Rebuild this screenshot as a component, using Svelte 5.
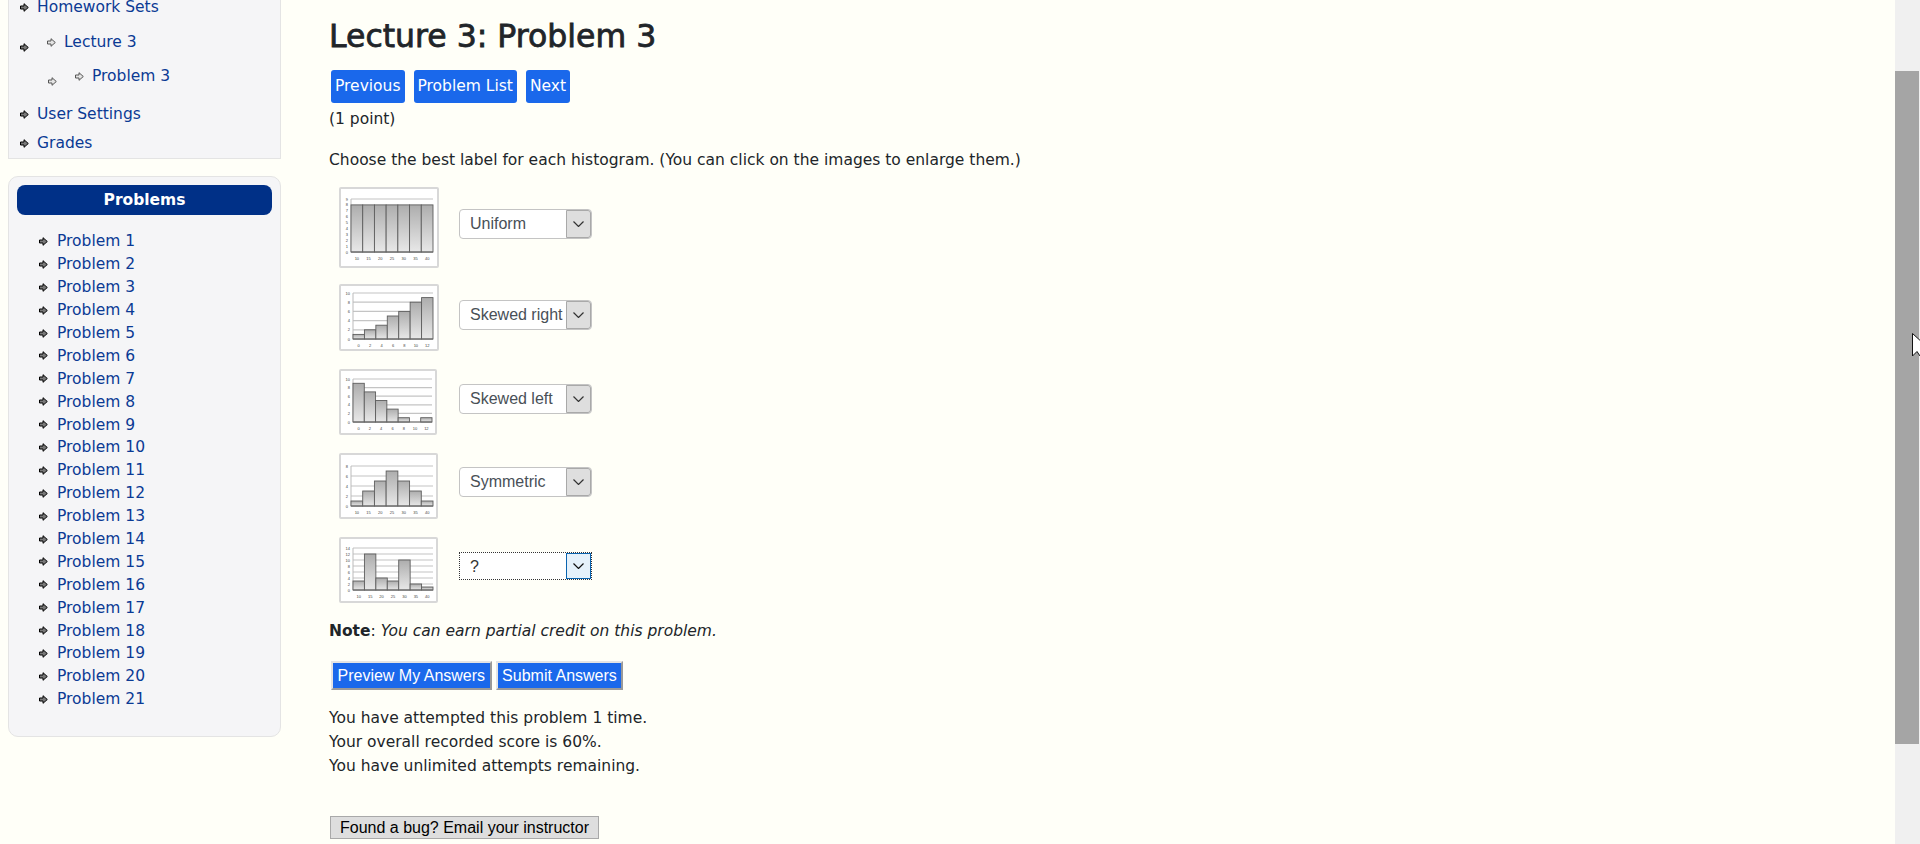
<script>
  const problems = Array.from({ length: 21 }, (_, i) => `Problem ${i + 1}`);

  const charts = [
    { w: 100, h: 81, x0: 12, x1: 94, base: 65, top: 12, max: 9, step: 1, gridStep: 9, bars: [8, 8, 8, 8, 8, 8, 8], xs: [10, 15, 20, 25, 30, 35, 40], label: "Uniform", dy: 22 },
    { w: 100, h: 67, x0: 14, x1: 94, base: 55, top: 9, max: 10, step: 2, gridStep: 2, bars: [1, 2, 3, 5, 6, 8, 9], xs: [0, 2, 4, 6, 8, 10, 12], label: "Skewed right", dy: 16 },
    { w: 98, h: 66, x0: 14, x1: 93, base: 53, top: 10, max: 10, step: 2, gridStep: 2, bars: [9, 7, 5, 3, 1, 0, 1], xs: [0, 2, 4, 6, 8, 10, 12], label: "Skewed left", dy: 15 },
    { w: 99, h: 66, x0: 12, x1: 94, base: 53, top: 13, max: 8, step: 2, gridStep: 2, bars: [1, 3, 5, 7, 5, 3, 1], xs: [10, 15, 20, 25, 30, 35, 40], label: "Symmetric", dy: 14 },
    { w: 99, h: 66, x0: 14, x1: 94, base: 53, top: 11, max: 14, step: 2, gridStep: 2, bars: [3, 12, 4, 3, 10, 2, 1], xs: [10, 15, 20, 25, 30, 35, 40], label: "?", dy: 15, focused: true }
  ];

  function ticks(max, step) {
    const out = [];
    for (let v = 0; v <= max; v += step) out.push(v);
    return out;
  }

  function yOf(c, v) {
    return c.base - ((c.base - c.top) * v) / c.max;
  }
</script>

{#snippet arrow(light)}
  <svg class="arrow" class:light width="9" height="9" viewBox="0 0 9 9">
    <path d="M.5 3H4V.7L8.3 4.5 4 8.3V6H.5Z" />
  </svg>
{/snippet}

<div class="page">
  <div class="scroller">
    <aside class="sidebar">
      <nav class="card site-nav">
        <div class="nav-row">{@render arrow(false)}<a href="#a">Homework Sets</a></div>
        <div class="nav-row nested">
          <span class="outer">{@render arrow(false)}</span>
          <span class="inner">{@render arrow(true)}</span>
          <a href="#a">Lecture 3</a>
        </div>
        <div class="nav-row nested second">
          <span class="outer">{@render arrow(true)}</span>
          <span class="inner">{@render arrow(true)}</span>
          <a href="#a">Problem 3</a>
        </div>
        <div class="nav-row settings">{@render arrow(false)}<a href="#a">User Settings</a></div>
        <div class="nav-row grades">{@render arrow(false)}<a href="#a">Grades</a></div>
      </nav>

      <section class="card problems">
        <h2>Problems</h2>
        <ul>
          {#each problems as p}
            <li>{@render arrow(false)}<a href="#a">{p}</a></li>
          {/each}
        </ul>
      </section>
    </aside>

    <main>
      <h1>Lecture 3: Problem 3</h1>
      <div class="pager">
        <a class="btn" href="#a">Previous</a>
        <a class="btn" href="#a">Problem List</a>
        <a class="btn" href="#a">Next</a>
      </div>
      <p class="points">(1 point)</p>
      <p class="prompt">Choose the best label for each histogram. (You can click on the images to enlarge them.)</p>

      <div class="charts">
        {#each charts as c, i}
          <div class="chart-row">
            <svg class="thumb" width={c.w} height={c.h} viewBox="0 0 {c.w} {c.h}">
              <defs>
                <linearGradient id="bar{i}" x1="0" y1="0" x2="0" y2="1">
                  <stop offset="0" stop-color="#adadad" />
                  <stop offset="1" stop-color="#e8e8e8" />
                </linearGradient>
              </defs>
              <rect x="1" y="1" width={c.w - 2} height={c.h - 2} fill="#fff" stroke="#d8d8d8" stroke-width="2" rx="1" />
              {#each ticks(c.max, c.gridStep) as v}
                <line x1={c.x0} x2={c.x1} y1={yOf(c, v)} y2={yOf(c, v)} stroke="#c4c4c4" stroke-width="1.2" />
              {/each}
              <line x1={c.x0} x2={c.x0} y1={c.top} y2={c.base} stroke="#bbb" />
              {#each c.bars as b, j}
                {#if b > 0}
                  <rect
                    x={c.x0 + ((c.x1 - c.x0) * j) / 7}
                    y={yOf(c, b)}
                    width={(c.x1 - c.x0) / 7}
                    height={c.base - yOf(c, b)}
                    fill="url(#bar{i})"
                    stroke="#5e5e5e"
                    stroke-width=".9"
                  />
                {/if}
              {/each}
              <line x1={c.x0} x2={c.x1} y1={c.base} y2={c.base} stroke="#666" />
              {#each ticks(c.max, c.step) as v}
                <text x={c.x0 - 3} y={yOf(c, v) + 1.5} text-anchor="end" class="tick">{v}</text>
              {/each}
              {#each c.xs as x, j}
                <text x={c.x0 + ((c.x1 - c.x0) * (j + 0.5)) / 7} y={c.base + 8} text-anchor="middle" class="tick">{x}</text>
              {/each}
            </svg>
            <div class="select" class:focused={c.focused} style="margin-top: {c.dy}px">
              <span class="value">{c.label}</span>
              <span class="caret">
                <svg width="11" height="6" viewBox="0 0 11 6"><path d="M.5.5l5 5 5-5" fill="none" stroke="currentColor" stroke-width="1.2" /></svg>
              </span>
            </div>
          </div>
        {/each}
      </div>

      <p class="note"><strong>Note</strong>: <em>You can earn partial credit on this problem.</em></p>

      <div class="actions">
        <button type="button">Preview My Answers</button>
        <button type="button">Submit Answers</button>
      </div>

      <div class="status">
        <div>You have attempted this problem 1 time.</div>
        <div>Your overall recorded score is 60%.</div>
        <div>You have unlimited attempts remaining.</div>
      </div>

      <button type="button" class="bug">Found a bug? Email your instructor</button>
    </main>
  </div>

  <div class="scrollbar"><div class="thumb-bar"></div></div>

  <svg class="cursor" width="12" height="24" viewBox="0 0 12 24">
    <path d="M.5.5V23L5 18.5 8 23 12 20V11Z" fill="#fff" stroke="#111" />
  </svg>
</div>

<style>
  :global(body) {
    margin: 0;
    background: #fffff8;
  }

  .page {
    position: relative;
    display: flex;
    height: 844px;
    overflow: hidden;
    font-family: "DejaVu Sans", sans-serif;
    font-size: 15.5px;
    color: #212529;
  }

  .scroller {
    flex: 1;
    display: flex;
    align-items: flex-start;
    margin-top: -8px;
  }

  .sidebar {
    width: 273px;
    margin-left: 8px;
    flex-shrink: 0;
  }

  a {
    color: #0b3a94;
    text-decoration: none;
  }

  .card {
    background: #f5f5f7;
    border: 1px solid #e4e4e4;
    box-sizing: border-box;
  }

  .site-nav {
    height: 167px;
    border-top: 0;
    padding: 4px 0 0 11px;
  }

  .nav-row {
    display: flex;
    align-items: center;
    height: 22px;
  }

  .nav-row > a {
    margin-left: 8px;
  }

  .arrow {
    flex-shrink: 0;
  }

  .arrow path {
    fill: #777;
    stroke: #000;
  }

  .arrow.light path {
    fill: #e4e4e4;
    stroke: #555;
  }

  .nested {
    margin-top: 13px;
  }

  .nested .outer {
    display: flex;
    margin-top: 11px;
  }

  .nested .inner {
    display: flex;
    margin-left: 18px;
    margin-top: 1px;
  }

  .nested.second {
    margin-top: 12px;
    padding-left: 28px;
  }

  .settings {
    margin-top: 16px;
  }

  .grades {
    margin-top: 7px;
  }

  .problems {
    margin-top: 17px;
    height: 561px;
    border-radius: 10px;
    padding: 8px;
  }

  .problems h2 {
    margin: 0;
    height: 30px;
    line-height: 30px;
    border-radius: 8px;
    background: #003087;
    color: #fff;
    font-size: 15.5px;
    font-weight: 700;
    text-align: center;
  }

  .problems ul {
    list-style: none;
    margin: 15px 0 0;
    padding: 0 0 0 22px;
  }

  .problems li {
    display: flex;
    align-items: center;
    gap: 9px;
    height: 22.9px;
  }

  main {
    margin-left: 48px;
    min-width: 0;
  }

  h1 {
    margin: 24px 0 0;
    font-size: 31.5px;
    line-height: 40px;
    font-weight: 400;
    -webkit-text-stroke: 0.8px #212529;
  }

  .pager {
    display: flex;
    gap: 9px;
    margin: 14px 0 0 2px;
  }

  .btn {
    display: block;
    height: 33px;
    line-height: 32px;
    padding: 0 4px;
    background: #1a68eb;
    color: #fff;
    border-radius: 3px;
  }

  .points {
    margin: 5px 0 0;
    line-height: 22px;
  }

  .prompt {
    margin: 19px 0 0;
    line-height: 22px;
  }

  .charts {
    margin-top: 16px;
    padding-left: 10px;
    display: flex;
    flex-direction: column;
    gap: 18px;
  }

  .chart-row {
    display: grid;
    grid-template-columns: 120px auto;
    justify-content: start;
    align-items: start;
  }

  .chart-row:first-child {
    margin-bottom: -2px;
  }

  .thumb {
    display: block;
  }

  .tick {
    font-size: 4px;
    fill: #444;
    font-family: "Liberation Sans", sans-serif;
  }

  .select {
    display: flex;
    width: 133px;
    height: 30px;
    box-sizing: border-box;
    border: 1px solid #c4c4c4;
    border-radius: 4px;
    background: #fff;
    font-family: "Liberation Sans", sans-serif;
    font-size: 16px;
    color: #495057;
  }

  .value {
    flex: 1;
    padding-left: 10px;
    line-height: 28px;
    white-space: nowrap;
  }

  .caret {
    width: 25px;
    display: flex;
    align-items: center;
    justify-content: center;
    background: #dedede;
    border: 1px solid #a9a9a9;
    box-sizing: border-box;
    border-radius: 0 3px 3px 0;
    color: #333;
  }

  .select.focused {
    height: 28px;
    border: 1px dotted #333;
    border-radius: 0;
    color: #333;
  }

  .select.focused .caret {
    background: #e5f1fb;
    border-color: #0a64b0;
    color: #111;
    border-radius: 0;
  }

  .note {
    margin: 17px 0 0;
    line-height: 22px;
  }

  .actions {
    display: flex;
    gap: 4px;
    margin: 19px 0 0 2px;
  }

  .actions button {
    height: 29px;
    padding: 0 4.5px;
    background: #1a68eb;
    color: #fff;
    border: 2px solid;
    border-color: #e4e4e4 #9a9a9a #9a9a9a #e4e4e4;
    font-family: "Liberation Sans", sans-serif;
    font-size: 16px;
  }

  .status {
    margin-top: 16px;
    line-height: 24px;
  }

  .bug {
    display: block;
    margin: 38px 0 0 1px;
    height: 23px;
    width: 269px;
    padding: 0;
    background: #dedede;
    color: #000;
    border: 1px solid #a9a9a9;
    font-family: "Liberation Sans", sans-serif;
    font-size: 16px;
  }

  .scrollbar {
    width: 25px;
    flex-shrink: 0;
    background: #f0f0f0;
    padding-top: 71px;
    box-sizing: border-box;
  }

  .thumb-bar {
    width: 24px;
    height: 673px;
    background: #a5a5a5;
  }

  .cursor {
    position: absolute;
    left: 1912px;
    top: 333px;
  }
</style>
